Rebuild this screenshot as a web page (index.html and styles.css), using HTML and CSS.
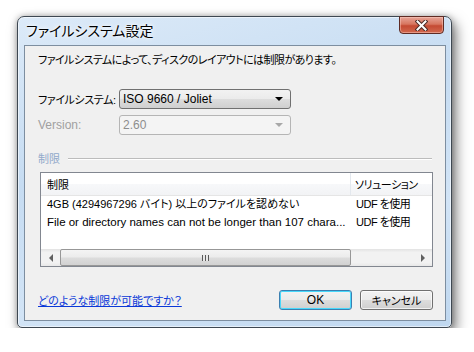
FILE: index.html
```html
<!DOCTYPE html>
<html lang="ja">
<head>
    <meta charset="UTF-8">
    <title>ファイルシステム設定</title>
    <link rel="stylesheet" href="styles.css">
</head>
<body>
    <div class="window">
        <!-- Barra de título -->
        <div class="titlebar">
            <span class="title">ファイルシステム設定</span>
            <div class="close-btn">
                <svg width="13" height="11" viewBox="0 0 13 11">
                    <path d="M2.5 1.5 L10.5 9.5 M10.5 1.5 L2.5 9.5" stroke="#4a2a26" stroke-width="4" stroke-linecap="square"/>
                    <path d="M2.5 1.5 L10.5 9.5 M10.5 1.5 L2.5 9.5" stroke="#ffffff" stroke-width="2" stroke-linecap="square"/>
                </svg>
            </div>
        </div>

        <div class="client">
            <p class="intro">ファイルシステムによって、ディスクのレイアウトには制限があります。</p>

            <div class="field">
                <span class="field-label">ファイルシステム:</span>
                <div class="combo">
                    <span class="combo-text latin">ISO 9660 / Joliet</span>
                    <span class="combo-arrow"></span>
                </div>
            </div>

            <div class="field disabled">
                <span class="field-label latin">Version:</span>
                <div class="combo">
                    <span class="combo-text latin">2.60</span>
                    <span class="combo-arrow"></span>
                </div>
            </div>

            <div class="group">
                <span class="group-label">制限</span>
                <span class="group-line"></span>
            </div>

            <div class="listview">
                <div class="lv-header">
                    <div class="col col-main">制限</div>
                    <div class="col col-sol">ソリューション</div>
                </div>
                <div class="lv-body">
                    <div class="lv-row">
                        <div class="col col-main">4GB (4294967296 バイト) 以上のファイルを認めない</div>
                        <div class="col col-sol">UDF を使用</div>
                    </div>
                    <div class="lv-row">
                        <div class="col col-main row-latin">File or directory names can not be longer than 107 chara...</div>
                        <div class="col col-sol">UDF を使用</div>
                    </div>
                </div>
                <div class="hscroll">
                    <div class="sb-btn"><span class="sb-left"></span></div>
                    <div class="sb-track">
                        <div class="sb-thumb"><span class="grip"></span></div>
                    </div>
                    <div class="sb-btn"><span class="sb-right"></span></div>
                </div>
            </div>

            <div class="footer">
                <a href="#" class="help-link">どのような制限が可能ですか？</a>
                <div class="buttons">
                    <button class="btn default">OK</button>
                    <button class="btn">キャンセル</button>
                </div>
            </div>
        </div>
    </div>
</body>
</html>
```

FILE: styles.css
```css
/* Reset */
* {
    margin: 0;
    padding: 0;
    box-sizing: border-box;
}

body {
    font-family: "Liberation Sans", "Noto Sans CJK JP", sans-serif;
    font-size: 11px;
    font-feature-settings: "palt";
    color: #000;
    background: #ffffff;
    padding: 16px 0 0 17px;
}

.latin {
    font-size: 12px;
}

/* Ventana */
.window {
    width: 435px;
    height: 312px;
    border: 1px solid #3e4852;
    border-radius: 7px 7px 5px 5px;
    background: linear-gradient(165deg, #dceaf8 0%, #c6dcf2 40%, #d2e4f6 70%, #bfd7ef 100%);
    box-shadow: inset 0 0 0 1px rgba(255, 255, 255, 0.55), 4px 6px 13px rgba(0, 0, 0, 0.5), 0 0 6px rgba(0, 0, 0, 0.28);
    padding: 0 5px 6px 6px;
    display: flex;
    flex-direction: column;
}

.titlebar {
    height: 28px;
    display: flex;
    justify-content: space-between;
    align-items: flex-start;
}

.title {
    font-size: 14px;
    line-height: 16px;
    padding: 6px 0 0 2px;
    text-shadow: 0 0 6px #fff, 0 0 3px #fff;
}

.close-btn {
    width: 45px;
    height: 18px;
    margin: -1px 2px 0 0;
    border: 1px solid #5e2b24;
    border-radius: 0 0 4px 4px;
    background: linear-gradient(to bottom, #e7a598 0%, #d7755f 45%, #c44a33 55%, #d2694f 100%);
    box-shadow: inset 0 0 0 1px rgba(255, 210, 200, 0.45);
    display: flex;
    align-items: center;
    justify-content: center;
}

/* Área cliente */
.client {
    flex: 1;
    border: 1px solid #7d8ea0;
    background: #f0f0f0;
    padding: 6px 12px 10px 13px;
    display: flex;
    flex-direction: column;
}

.intro {
    line-height: 16px;
    letter-spacing: -0.55px;
    white-space: nowrap;
}

.field {
    display: flex;
    align-items: center;
    margin-top: 21px;
}

.field + .field {
    margin-top: 6px;
}

.field-label {
    width: 81px;
    white-space: nowrap;
    letter-spacing: -0.4px;
}

.field-label.latin {
    letter-spacing: 0;
}

.combo {
    width: 172px;
    height: 20px;
    border: 1px solid #707070;
    border-radius: 3px;
    background: linear-gradient(to bottom, #f2f2f2 0%, #ebebeb 50%, #dddddd 51%, #cfcfcf 100%);
    display: flex;
    align-items: center;
    justify-content: space-between;
    padding: 0 7px 0 3px;
}

.combo-arrow {
    width: 0;
    height: 0;
    border-left: 4px solid transparent;
    border-right: 4px solid transparent;
    border-top: 4px solid #000;
}

.disabled .field-label {
    color: #a0a0a0;
}

.disabled .combo {
    border-color: #b5b5b5;
    background: #f4f4f4;
}

.disabled .combo-text {
    color: #8d8d8d;
}

.disabled .combo-arrow {
    border-top-color: #a8a8a8;
}

/* Grupo */
.group {
    display: flex;
    align-items: center;
    margin-top: 16px;
    height: 14px;
}

.group-label {
    color: #92aacb;
    margin-right: 8px;
}

.group-line {
    flex: 1;
    height: 1px;
    margin-right: 1px;
    background: #bcbcbc;
    box-shadow: 0 1px 0 #ffffff;
}

/* Lista */
.listview {
    margin: 7px 0 0 2px;
    height: 95px;
    border: 1px solid #828790;
    background: #fff;
    display: flex;
    flex-direction: column;
}

.lv-header {
    display: flex;
    height: 23px;
    border-bottom: 1px solid #e5e5e5;
    background: linear-gradient(to bottom, #ffffff 0%, #ffffff 50%, #f7f8fa 51%, #f2f3f5 100%);
}

.lv-header .col {
    line-height: 24px;
}

.col {
    white-space: nowrap;
    overflow: hidden;
}

.col-main {
    width: 309px;
    padding-left: 6px;
}

.col-sol {
    flex: 1;
    padding-left: 5px;
    letter-spacing: -0.5px;
}

.lv-header .col-sol {
    border-left: 1px solid #e3e8ee;
    padding-left: 4px;
}

.row-latin {
    font-size: 11.5px;
}

.lv-body {
    flex: 1;
}

.lv-row {
    display: flex;
    height: 18px;
    line-height: 17px;
}

.lv-row .col-sol {
    padding-left: 6px;
}

/* Barra de desplazamiento */
.hscroll {
    height: 17px;
    display: flex;
    background: linear-gradient(to bottom, #e3e3e3 0%, #f2f2f2 20%, #f2f2f2 80%, #e8e8e8 100%);
}

.sb-btn {
    width: 19px;
    display: flex;
    align-items: center;
    justify-content: center;
}

.sb-left {
    border-top: 4px solid transparent;
    border-bottom: 4px solid transparent;
    border-right: 4px solid #606060;
}

.sb-right {
    border-top: 4px solid transparent;
    border-bottom: 4px solid transparent;
    border-left: 4px solid #606060;
}

.sb-track {
    flex: 1;
    display: flex;
}

.sb-thumb {
    width: 291px;
    border: 1px solid #979797;
    border-radius: 2px;
    background: linear-gradient(to bottom, #f4f4f4 0%, #ececec 45%, #dcdcdc 55%, #d2d2d2 100%);
    display: flex;
    align-items: center;
    justify-content: center;
}

.grip {
    width: 7px;
    height: 6px;
    background: repeating-linear-gradient(to right, #5a5a5a 0, #5a5a5a 1px, #e8e8e8 1px, #e8e8e8 3px);
}

/* Pie */
.footer {
    margin-top: auto;
    display: flex;
    align-items: center;
    justify-content: space-between;
}

.help-link {
    color: #0a38d8;
    text-decoration: underline;
}

.buttons {
    display: flex;
    gap: 8px;
}

.btn {
    width: 73px;
    height: 20px;
    font-family: "Liberation Sans", "Noto Sans CJK JP", sans-serif;
    font-size: 11px;
    font-feature-settings: "palt";
    border: 1px solid #707070;
    border-radius: 3px;
    background: linear-gradient(to bottom, #f2f2f2 0%, #ebebeb 50%, #dddddd 51%, #cfcfcf 100%);
    box-shadow: inset 0 0 0 1px rgba(255, 255, 255, 0.7);
    color: #000;
}

.btn.default {
    font-size: 12px;
    border-color: #3c7fb1;
    box-shadow: inset 0 0 0 1px #48d8fb;
}
```
